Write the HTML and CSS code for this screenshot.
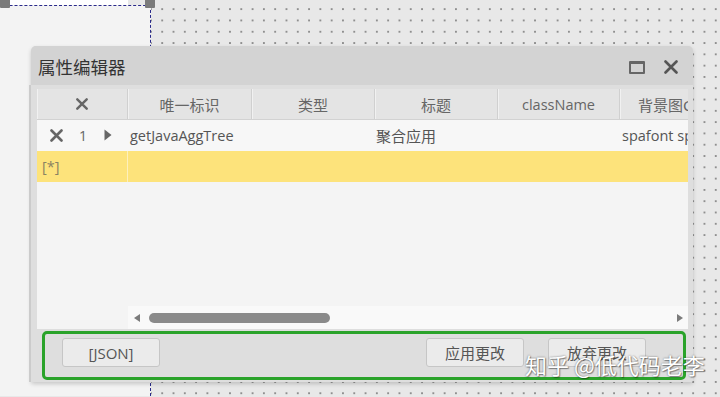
FILE: index.html
```html
<!DOCTYPE html>
<html>
<head>
  <meta charset="utf-8">
  <link rel="stylesheet" href="styles.css">
</head>
<body>
  <!-- designer canvas: selected panel on the left -->
  <div class="top-strip"></div>
  <div class="selected-box"></div>
  <div class="handle handle-left"></div>
  <div class="handle handle-right"></div>

  <div class="dialog">
    <div class="titlebar">
      <span class="title">属性编辑器</span>
      <div class="title-tools">
        <span class="icon-max"></span>
        <svg class="icon-close" width="14" height="14" viewBox="0 0 14 14">
          <path d="M1.5 1.5 L12.5 12.5 M12.5 1.5 L1.5 12.5" stroke="#555" stroke-width="2.6" stroke-linecap="round"/>
        </svg>
      </div>
    </div>

    <div class="dialog-body">
      <div class="grid">
        <div class="grid-rows">
          <div class="row header">
            <div class="cell frozen head-x">
              <svg width="12" height="12" viewBox="0 0 12 12">
                <path d="M1.3 1.3 L10.7 10.7 M10.7 1.3 L1.3 10.7" stroke="#666" stroke-width="2.4" stroke-linecap="round"/>
              </svg>
            </div>
            <div class="cell c1">唯一标识</div>
            <div class="cell c2">类型</div>
            <div class="cell c3">标题</div>
            <div class="cell c4">className</div>
            <div class="cell c5">背景图CSS</div>
          </div>

          <div class="row data">
            <div class="cell frozen row-tools">
              <svg class="row-del" width="13" height="13" viewBox="0 0 13 13">
                <path d="M1.5 1.5 L11.5 11.5 M11.5 1.5 L1.5 11.5" stroke="#666" stroke-width="2.6" stroke-linecap="round"/>
              </svg>
              <span class="row-num">1</span>
              <svg class="row-arrow" width="8" height="12" viewBox="0 0 8 12">
                <path d="M0.5 0.5 L7.5 6 L0.5 11.5 Z" fill="#666"/>
              </svg>
            </div>
            <div class="cell c1">getJavaAggTree</div>
            <div class="cell c2"></div>
            <div class="cell c3">聚合应用</div>
            <div class="cell c4"></div>
            <div class="cell c5">spafont spa-icon-tree</div>
          </div>

          <div class="row new-row">
            <div class="cell frozen new-mark">[*]</div>
            <div class="cell c1"></div>
            <div class="cell c2"></div>
            <div class="cell c3"></div>
            <div class="cell c4"></div>
            <div class="cell c5"></div>
          </div>
        </div>

        <div class="hscroll">
          <span class="arrow-left"></span>
          <div class="track">
            <div class="thumb"></div>
          </div>
          <span class="arrow-right"></span>
        </div>
      </div>

      <div class="footer">
        <button class="btn">[JSON]</button>
        <div class="footer-right">
          <button class="btn">应用更改</button>
          <button class="btn">放弃更改</button>
        </div>
      </div>
    </div>
  </div>

  <div class="watermark">知乎 @低代码老李</div>
</body>
</html>
```

FILE: styles.css
```css
body {
  margin: 0;
  width: 720px;
  height: 397px;
  overflow: hidden;
  position: relative;
  font-family: 'Noto Sans', 'Noto Sans CJK SC', sans-serif;
  color: #555;
  background-color: #e8e8e8;
  background-image: radial-gradient(circle, #8f8f8f 0.8px, transparent 1.1px);
  background-size: 11.3px 11.3px;
  background-position: -1.6px 3.5px;
}

/* designer selection */
.top-strip {
  position: absolute;
  left: 0;
  top: 0;
  width: 128px;
  height: 5px;
  background: #fff;
}

.selected-box {
  position: absolute;
  left: -30px;
  top: 5px;
  width: 179px;
  height: 390px;
  background: #f3f3f3;
  border: 1px dashed #2a2a8a;
  border-bottom: none;
}

.handle {
  position: absolute;
  top: -2px;
  width: 10px;
  height: 10px;
  background: #7a7a7a;
  border-radius: 1px;
}

.handle-left {
  left: 0;
}

.handle-right {
  left: 145px;
}

/* dialog window */
.dialog {
  position: absolute;
  left: 31px;
  top: 46px;
  width: 662px;
  height: 336px;
  display: flex;
  flex-direction: column;
  background: #dedede;
  border-radius: 5px 5px 2px 2px;
  box-shadow: 0 2px 4px rgba(0, 0, 0, 0.18);
}

.titlebar {
  flex-shrink: 0;
  height: 39px;
  display: flex;
  align-items: center;
  justify-content: space-between;
  padding: 0 15px 0 7px;
  background: #d3d3d3;
  border-radius: 5px 5px 0 0;
}

.title {
  font-family: 'Noto Sans CJK SC', sans-serif;
  font-size: 17.5px;
  color: #333;
  margin-top: 2px;
}

.title-tools {
  display: flex;
  align-items: center;
  gap: 19px;
  margin-top: 3px;
}

.icon-max {
  display: block;
  width: 12px;
  height: 8px;
  border: 2px solid #666;
  border-top-width: 3px;
  border-radius: 1px;
}

.icon-close {
  display: block;
}

.dialog-body {
  flex: 1;
  display: flex;
  flex-direction: column;
  padding: 4px 5px 0 6px;
  border-left: 2px solid #cbcbcb;
  margin-left: -2px;
}

/* grid */
.grid {
  flex-shrink: 0;
  height: 240px;
  display: flex;
  flex-direction: column;
  background: #f4f4f4;
  overflow: hidden;
}

.grid-rows {
  flex: 1;
}

.row {
  display: grid;
  grid-template-columns: 91px 124px 123px 123px 122px 124px;
  height: 31px;
}

.cell {
  display: flex;
  align-items: center;
  padding-left: 2px;
  font-size: 15px;
  white-space: nowrap;
  overflow: hidden;
}

.header {
  height: 30px;
  background: #e4e4e4;
  border-bottom: 1px solid #d2d2d2;
}

.header .cell {
  justify-content: center;
  padding: 0;
  color: #666;
  border-right: 1px solid #d0d0d0;
  box-shadow: inset 1px 0 0 #f1f1f1;
}

.header .c4 {
  font-family: 'Open Sans', 'Noto Sans CJK SC', sans-serif;
  font-size: 14.5px;
}

.header .c5 {
  justify-content: flex-start;
  padding-left: 18px;
}

.data {
  background: #f7f7f7;
}

.data .c1,
.data .c5 {
  font-family: 'Open Sans', sans-serif;
  font-size: 14.5px;
  color: #555;
}

.data .c3 {
  padding-left: 1px;
}

.row-tools {
  padding-left: 13px;
}

.row-num {
  width: 28px;
  margin-left: 6px;
  text-align: center;
  font-family: 'Open Sans', sans-serif;
  font-size: 14px;
  color: #666;
}

.row-arrow {
  margin-left: 7px;
  margin-top: -2px;
}

.new-row {
  background: #fde37b;
}

.new-row .frozen {
  border-right: 1px solid #fdf0bd;
}

.new-mark {
  padding-left: 5px;
  font-family: 'Open Sans', sans-serif;
  font-size: 14.5px;
  color: #8a8262;
}

/* horizontal scrollbar */
.hscroll {
  height: 23px;
  margin-left: 91px;
  display: flex;
  align-items: center;
  padding: 0 5px 0 6px;
  background: #f9f9f9;
}

.arrow-left,
.arrow-right {
  width: 0;
  height: 0;
  border-top: 4px solid transparent;
  border-bottom: 4px solid transparent;
}

.arrow-left {
  border-right: 6px solid #7b7b7b;
}

.arrow-right {
  border-left: 6px solid #7b7b7b;
}

.track {
  flex: 1;
  padding-left: 9px;
}

.thumb {
  width: 181px;
  height: 10px;
  border-radius: 5px;
  background: #8a8a8a;
}

/* footer */
.footer {
  box-sizing: border-box;
  height: 49px;
  margin: 2px 2px 0 5px;
  display: flex;
  align-items: flex-start;
  justify-content: space-between;
  padding: 4px 37px 0 17px;
  border: 3px solid #2aa32a;
  border-radius: 5px;
  background: #dedede;
}

.footer-right {
  display: flex;
  gap: 24px;
}

.btn {
  width: 98px;
  height: 29px;
  padding: 0;
  border: 1px solid #c6c6c6;
  border-radius: 3px;
  background: #ebebeb;
  color: #555;
  font-family: 'Open Sans', 'Noto Sans CJK SC', sans-serif;
  font-size: 15px;
}

.watermark {
  position: absolute;
  left: 525px;
  top: 348px;
  font-family: 'Noto Sans CJK SC', sans-serif;
  font-size: 22px;
  color: #fff;
  text-shadow: 0 0 2px rgba(0, 0, 0, 0.55), 1px 1px 1px rgba(0, 0, 0, 0.35);
}
```
